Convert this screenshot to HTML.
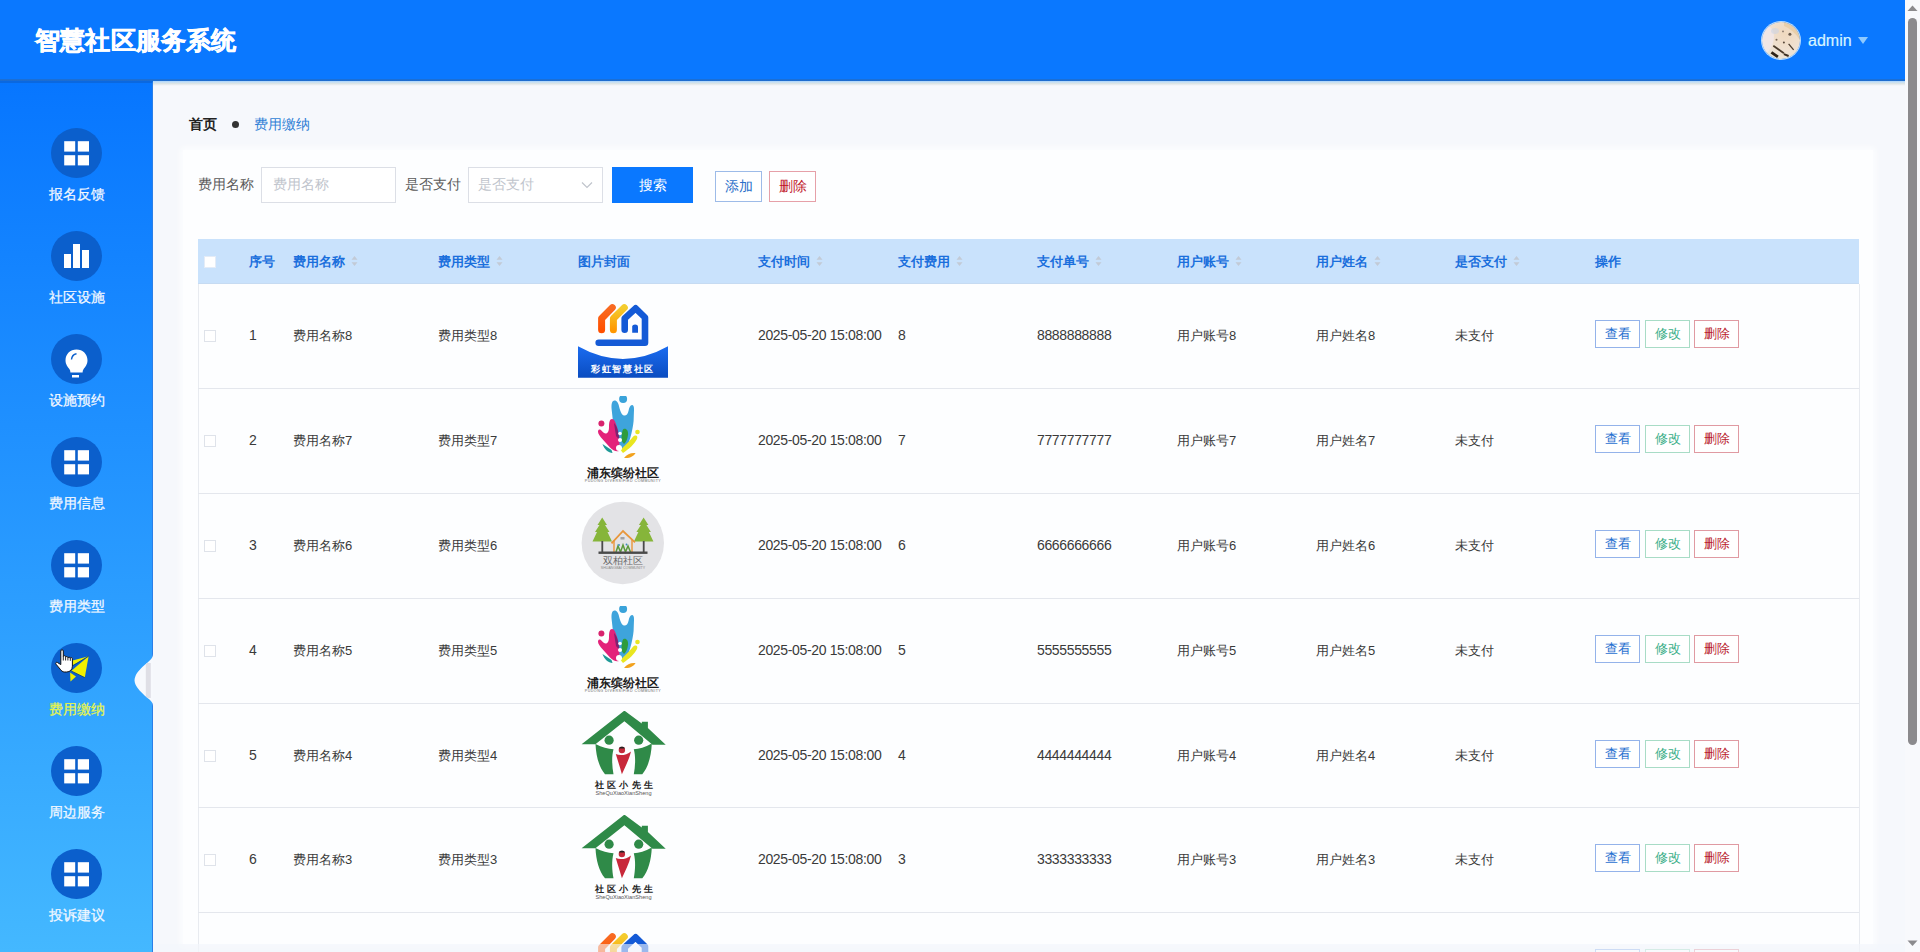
<!DOCTYPE html><html><head><meta charset="utf-8"><title>fee</title><style>
*{margin:0;padding:0;box-sizing:border-box}
html,body{width:1920px;height:952px;overflow:hidden;background:#f6f8fc;font-family:"Liberation Sans",sans-serif}
#hdr{position:absolute;left:0;top:0;width:1905px;height:81px;background:linear-gradient(#0a78ff 0,#0a78ff 79px,#1a70d8 79px,#1f6bcc 81px);z-index:5}
#hsh{position:absolute;left:153px;top:81px;width:1752px;height:5px;background:linear-gradient(#a9d4fb,#cfe1f0 35%,#dde5e2 55%,#eef0f5 80%,rgba(246,248,252,0));z-index:4}
#title{position:absolute;left:35px;top:24px;font-size:25px;font-weight:bold;color:#fff;letter-spacing:0.2px;white-space:nowrap;-webkit-text-stroke:0.6px #fff}
#avatar{position:absolute;left:1762px;top:22px;width:38px;height:37px;border-radius:50%;overflow:hidden;box-shadow:0 0 0 1px #b8dcff}
#admin{position:absolute;left:1808px;top:32px;font-size:16px;color:#d6f4ff;white-space:nowrap;-webkit-text-stroke:0.2px #d6f4ff}
#caret{position:absolute;left:1858px;top:37px;width:0;height:0;border-left:5px solid transparent;border-right:5px solid transparent;border-top:7px solid #8fcaff}
#side{position:absolute;left:0;top:81px;width:153px;height:871px;background:linear-gradient(#0776ff,#44b8ff);border-top:2px solid #0a68e0;border-right:1px solid #2a7fe8}
.mi{position:absolute;left:0;width:153px;height:103px}
.mi .c{position:absolute;left:51px;top:0;width:51px;height:50px;border-radius:50%;background:#0b5fcc}
.mi .c svg{position:absolute;left:0;top:0}
.mi .t{position:absolute;left:0;width:153px;top:58px;text-align:center;font-size:14px;color:#f2f8ff;white-space:nowrap;-webkit-text-stroke:0.25px currentColor}
#scroll{position:absolute;left:1905px;top:0;width:15px;height:952px;background:#f8f9fc}
#thumb{position:absolute;left:1908px;top:18px;width:9px;height:727px;border-radius:5px;background:#8b8a8d}
#panel{position:absolute;left:183px;top:150px;width:1690px;height:794px;background:#fdfeff;box-shadow:0 0 6px 2px #fdfeff}
.a{position:absolute;white-space:nowrap}
.lbl{font-size:14px;color:#5a5a5a}
.inp{border:1px solid #dcdfe6;background:#fff}
.ph{font-size:14px;color:#c0c4cc}
.th{position:absolute;top:239px;height:45px;background:#c9e2fc;border-bottom:1px solid #c6dbf2}
.h{position:absolute;top:253px;font-size:13px;font-weight:bold;color:#1a6fdc;white-space:nowrap}
.sort{position:absolute;width:7px;height:12px}
.d{position:absolute;font-size:13px;color:#3a3a3a;white-space:nowrap}
.n{font-size:14px;letter-spacing:-0.35px}
.ln{position:absolute;left:198px;width:1661px;height:1px;background:#e4e7ed}
.ob{position:absolute;width:45px;height:28px;font-size:13px;text-align:center;line-height:26px;background:#fff}
</style></head><body>
<div id="hdr"><div id="title">智慧社区服务系统</div>
<div id="avatar"><svg width="38" height="38" viewBox="0 0 38 38"><defs><radialGradient id="av" cx="0.6" cy="0.3" r="0.8"><stop offset="0" stop-color="#f0d9bf"/><stop offset="0.6" stop-color="#efe1d2"/><stop offset="1" stop-color="#e9e6d6"/></radialGradient></defs><filter id="avb"><feGaussianBlur stdDeviation="0.6"/></filter><g filter="url(#avb)"><rect width="38" height="38" fill="url(#av)"/><path d="M0 4C6 2 12 6 12 14 12 22 8 30 0 34Z" fill="#f1e7ea" opacity=".8"/><path d="M22 0H38V18C34 12 28 6 22 4Z" fill="#e6c79c" opacity=".7"/><ellipse cx="13" cy="9" rx="4" ry="3" fill="#cdd3e2" opacity=".6"/><path d="M11.3 23.8L21.9 31.2" stroke="#4a3a2c" stroke-width="1.8"/><path d="M9.4 30.3L15.9 34.9" stroke="#2e2418" stroke-width="2.8"/><path d="M21.9 32.1L26.6 34" stroke="#3a2e22" stroke-width="2"/><path d="M26.6 21.9L31.6 27.9" stroke="#4a3a2c" stroke-width="1.3"/><circle cx="27.9" cy="12.2" r="1.5" fill="#6a5a4c"/><circle cx="21.9" cy="20.5" r="1" fill="#5a4a3c"/><circle cx="14.5" cy="17.8" r="1" fill="#7a6a5c"/><circle cx="21" cy="9.4" r="0.9" fill="#8a7a6c"/></g></svg></div>
<div id="admin">admin</div><div id="caret"></div></div>
<div id="side"></div><div id="hsh"></div>
<div class="mi" style="top:128px"><div class="c"><svg width="51" height="50" viewBox="0 0 51 50"><rect x="13.2" y="13.2" width="11" height="10.4" fill="#fff"/><rect x="26.8" y="13.2" width="11.2" height="10.4" fill="#fff"/><rect x="13.2" y="27.2" width="11" height="10.2" fill="#fff"/><rect x="26.8" y="27.2" width="11.2" height="10.2" fill="#fff"/></svg></div><div class="t" style="color:#f2f8ff">报名反馈</div></div>
<div class="mi" style="top:231px"><div class="c"><svg width="51" height="50" viewBox="0 0 51 50"><rect x="13" y="23" width="7" height="14" fill="#fff"/><rect x="22" y="13" width="7" height="24" fill="#fff"/><rect x="31" y="19" width="7" height="18" fill="#fff"/></svg></div><div class="t" style="color:#f2f8ff">社区设施</div></div>
<div class="mi" style="top:334px"><div class="c"><svg width="51" height="50" viewBox="0 0 51 50"><path d="M25.5 15.5C31.9 15.5 36.5 20.2 36.5 26.2C36.5 30.5 34.2 32.8 32.5 35.2C31.8 36.3 31.6 37.3 31.6 38.5H19.4C19.4 37.3 19.2 36.3 18.5 35.2C16.8 32.8 14.5 30.5 14.5 26.2C14.5 20.2 19.1 15.5 25.5 15.5Z" fill="#fff"/><path d="M20.5 25.5C20.8 22.2 22.8 20.3 25.5 19.8" stroke="#0b5fcc" stroke-width="1.4" fill="none"/><rect x="21" y="41" width="7" height="2.5" fill="#fff"/></svg></div><div class="t" style="color:#f2f8ff">设施预约</div></div>
<div class="mi" style="top:437px"><div class="c"><svg width="51" height="50" viewBox="0 0 51 50"><rect x="13.2" y="13.2" width="11" height="10.4" fill="#fff"/><rect x="26.8" y="13.2" width="11.2" height="10.4" fill="#fff"/><rect x="13.2" y="27.2" width="11" height="10.2" fill="#fff"/><rect x="26.8" y="27.2" width="11.2" height="10.2" fill="#fff"/></svg></div><div class="t" style="color:#f2f8ff">费用信息</div></div>
<div class="mi" style="top:540px"><div class="c"><svg width="51" height="50" viewBox="0 0 51 50"><rect x="13.2" y="13.2" width="11" height="10.4" fill="#fff"/><rect x="26.8" y="13.2" width="11.2" height="10.4" fill="#fff"/><rect x="13.2" y="27.2" width="11" height="10.2" fill="#fff"/><rect x="26.8" y="27.2" width="11.2" height="10.2" fill="#fff"/></svg></div><div class="t" style="color:#f2f8ff">费用类型</div></div>
<div class="mi" style="top:643px"><div class="c"><svg width="51" height="50" viewBox="0 0 51 50"><path d="M20.1 27.9L37.6 13.2L33.8 34.6Z" fill="#f0f000"/><path d="M21.6 17.6L37.6 13.2L20.1 23.2Z" fill="#f0f000"/><path d="M19.1 29.6L25 33.4L19.5 38.4Z" fill="#f0f000"/><path d="M20.1 23.7L37.6 13.2M20.1 27.9L33.8 34.6" stroke="#0a3a7a" stroke-width="0.8"/><path d="M9.8 8C9.8 6.3 12.3 6.3 12.3 8V13.6C12.3 12.4 14.6 12.4 14.6 13.6V14.4C14.6 13.3 16.9 13.3 16.9 14.4V15C16.9 13.9 19.3 13.9 19.3 15V15.4C19.3 14.3 21.4 14.3 21.4 15.6V23.2C21.4 26.6 19 29 15.6 29H13.6C11.6 29 10.4 27.8 9.2 26.2L5 21.2C4.2 20.1 5.3 18.8 6.4 19.5L9.8 21.6Z" fill="#fff" stroke="#111" stroke-width="1"/><path d="M12.3 13.6V17.5M14.6 14.4V17.5M16.9 15V17.5M19.3 15.4V17.8" stroke="#111" stroke-width="0.9"/></svg></div><div class="t" style="color:#e8f54a">费用缴纳</div></div>
<div class="mi" style="top:746px"><div class="c"><svg width="51" height="50" viewBox="0 0 51 50"><rect x="13.2" y="13.2" width="11" height="10.4" fill="#fff"/><rect x="26.8" y="13.2" width="11.2" height="10.4" fill="#fff"/><rect x="13.2" y="27.2" width="11" height="10.2" fill="#fff"/><rect x="26.8" y="27.2" width="11.2" height="10.2" fill="#fff"/></svg></div><div class="t" style="color:#f2f8ff">周边服务</div></div>
<div class="mi" style="top:849px"><div class="c"><svg width="51" height="50" viewBox="0 0 51 50"><rect x="13.2" y="13.2" width="11" height="10.4" fill="#fff"/><rect x="26.8" y="13.2" width="11.2" height="10.4" fill="#fff"/><rect x="13.2" y="27.2" width="11" height="10.2" fill="#fff"/><rect x="26.8" y="27.2" width="11.2" height="10.2" fill="#fff"/></svg></div><div class="t" style="color:#f2f8ff">投诉建议</div></div>
<svg style="position:absolute;left:133px;top:654px" width="20" height="52" viewBox="0 0 20 52"><defs><clipPath id="bc"><path d="M20 0C20 4 17 6.5 14 9C8 14 4 18 2.5 22C1.2 25 1.2 27.5 2.5 30.5C4 34 8 38.5 14 43.5C17 46 20 48 20 52Z"/></clipPath></defs><path d="M20 0C20 4 17 6.5 14 9C8 14 4 18 2.5 22C1.2 25 1.2 27.5 2.5 30.5C4 34 8 38.5 14 43.5C17 46 20 48 20 52Z" fill="#f7f9fd"/><rect x="12.8" y="9" width="5" height="35" fill="#dfdfe6" clip-path="url(#bc)"/></svg>
<div id="scroll"></div><div id="thumb"></div>
<svg style="position:absolute;left:1907px;top:5px" width="11" height="7"><path d="M5.5 0.5L10.5 6H0.5Z" fill="#8b8a8d"/></svg>
<svg style="position:absolute;left:1907px;top:940px" width="11" height="7"><path d="M0.5 0.5H10.5L5.5 6Z" fill="#8b8a8d"/></svg>
<div id="panel"></div>
<div class="a" style="left:189px;top:116px;font-size:14px;font-weight:bold;color:#222">首页</div>
<div class="a" style="left:232px;top:121px;width:7px;height:7px;border-radius:50%;background:#333"></div>
<div class="a" style="left:254px;top:115px;font-size:14.3px;color:#2f7fd6">费用缴纳</div>
<div class="a lbl" style="left:198px;top:176px">费用名称</div>
<div class="a inp" style="left:261px;top:167px;width:135px;height:36px"></div>
<div class="a ph" style="left:273px;top:176px">费用名称</div>
<div class="a lbl" style="left:405px;top:176px">是否支付</div>
<div class="a inp" style="left:468px;top:167px;width:135px;height:36px"></div>
<div class="a ph" style="left:478px;top:176px">是否支付</div>
<svg style="position:absolute;left:581px;top:181px" width="12" height="8"><path d="M1 1.5L6 6.5L11 1.5" stroke="#c0c4cc" stroke-width="1.2" fill="none"/></svg>
<div class="a" style="left:612px;top:167px;width:81px;height:36px;background:#0a78ff;color:#fff;font-size:14px;text-align:center;line-height:36px">搜索</div>
<div class="a" style="left:715px;top:171px;width:47px;height:31px;border:1px solid #9dbbe8;background:#fff;color:#2a6fc9;font-size:14px;text-align:center;line-height:29px">添加</div>
<div class="a" style="left:769px;top:171px;width:47px;height:31px;border:1px solid #e6a0a8;background:#fff;color:#c0152a;font-size:14px;text-align:center;line-height:29px">删除</div>
<div class="th" style="left:198px;width:1661px"></div>
<div class="a" style="left:204px;top:256px;width:12px;height:12px;background:#fff;border:1px solid #e4ecf7"></div>
<div class="h" style="left:249px">序号</div>
<div class="h" style="left:293px">费用名称</div>
<div class="sort" style="left:351px;top:253px"><svg width="7" height="12" viewBox="0 0 7 12"><path d="M0.5 4.8L3.5 1L6.5 4.8Z" fill="#c2cad6"/><path d="M0.5 7.2L3.5 11L6.5 7.2Z" fill="#c2cad6"/></svg></div>
<div class="h" style="left:438px">费用类型</div>
<div class="sort" style="left:496px;top:253px"><svg width="7" height="12" viewBox="0 0 7 12"><path d="M0.5 4.8L3.5 1L6.5 4.8Z" fill="#c2cad6"/><path d="M0.5 7.2L3.5 11L6.5 7.2Z" fill="#c2cad6"/></svg></div>
<div class="h" style="left:578px">图片封面</div>
<div class="h" style="left:758px">支付时间</div>
<div class="sort" style="left:816px;top:253px"><svg width="7" height="12" viewBox="0 0 7 12"><path d="M0.5 4.8L3.5 1L6.5 4.8Z" fill="#c2cad6"/><path d="M0.5 7.2L3.5 11L6.5 7.2Z" fill="#c2cad6"/></svg></div>
<div class="h" style="left:898px">支付费用</div>
<div class="sort" style="left:956px;top:253px"><svg width="7" height="12" viewBox="0 0 7 12"><path d="M0.5 4.8L3.5 1L6.5 4.8Z" fill="#c2cad6"/><path d="M0.5 7.2L3.5 11L6.5 7.2Z" fill="#c2cad6"/></svg></div>
<div class="h" style="left:1037px">支付单号</div>
<div class="sort" style="left:1095px;top:253px"><svg width="7" height="12" viewBox="0 0 7 12"><path d="M0.5 4.8L3.5 1L6.5 4.8Z" fill="#c2cad6"/><path d="M0.5 7.2L3.5 11L6.5 7.2Z" fill="#c2cad6"/></svg></div>
<div class="h" style="left:1177px">用户账号</div>
<div class="sort" style="left:1235px;top:253px"><svg width="7" height="12" viewBox="0 0 7 12"><path d="M0.5 4.8L3.5 1L6.5 4.8Z" fill="#c2cad6"/><path d="M0.5 7.2L3.5 11L6.5 7.2Z" fill="#c2cad6"/></svg></div>
<div class="h" style="left:1316px">用户姓名</div>
<div class="sort" style="left:1374px;top:253px"><svg width="7" height="12" viewBox="0 0 7 12"><path d="M0.5 4.8L3.5 1L6.5 4.8Z" fill="#c2cad6"/><path d="M0.5 7.2L3.5 11L6.5 7.2Z" fill="#c2cad6"/></svg></div>
<div class="h" style="left:1455px">是否支付</div>
<div class="sort" style="left:1513px;top:253px"><svg width="7" height="12" viewBox="0 0 7 12"><path d="M0.5 4.8L3.5 1L6.5 4.8Z" fill="#c2cad6"/><path d="M0.5 7.2L3.5 11L6.5 7.2Z" fill="#c2cad6"/></svg></div>
<div class="h" style="left:1595px">操作</div>
<div class="a" style="left:198px;top:284px;width:1px;height:668px;background:#e8ebf0"></div>
<div class="a" style="left:1859px;top:284px;width:1px;height:668px;background:#e8ebf0"></div>
<div class="ln" style="top:388px"></div>
<div class="ln" style="top:493px"></div>
<div class="ln" style="top:598px"></div>
<div class="ln" style="top:703px"></div>
<div class="ln" style="top:807px"></div>
<div class="ln" style="top:912px"></div>
<div class="a" style="left:204px;top:330px;width:12px;height:12px;border:1px solid #dfe3ea;background:#fff"></div>
<div class="d n" style="left:249px;top:327px">1</div>
<div class="d" style="left:293px;top:327px">费用名称8</div>
<div class="d" style="left:438px;top:327px">费用类型8</div>
<div class="a" style="left:578px;top:291px;width:90px;height:90px"><svg width="90" height="90" viewBox="0 0 90 90"><defs><linearGradient id="g0" x1="0" y1="0" x2="0" y2="1"><stop offset="0" stop-color="#1b6cf0"/><stop offset="1" stop-color="#0a4cc0"/></linearGradient><linearGradient id="gy" x1="0" y1="0" x2="0" y2="1"><stop offset="0" stop-color="#f4cc2e"/><stop offset="1" stop-color="#ff9800"/></linearGradient><linearGradient id="go" x1="0" y1="0" x2="0" y2="1"><stop offset="0" stop-color="#f86a22"/><stop offset="1" stop-color="#ff5000"/></linearGradient></defs>
<path d="M0 55.3Q45 80.5 90 55.3V86.8H0Z" fill="url(#g0)"/>
<path d="M23.6 38.8V27.5L34.3 16.6" stroke="url(#go)" stroke-width="7" stroke-linecap="round" stroke-linejoin="round" fill="none"/>
<path d="M35.4 38.8V27.5L46.3 16.6" stroke="url(#gy)" stroke-width="7" stroke-linecap="round" stroke-linejoin="round" fill="none"/>
<path d="M46.7 38.8V27.4L57.6 17.3L67 26.5V51.7H20.7" stroke="#145ad6" stroke-width="6.6" stroke-linecap="round" stroke-linejoin="round" fill="none"/>
<path d="M54.2 41.8V35.5C54.2 32.8 60 32.8 60 35.5V41.8Z" fill="#145ad6"/>
<text x="45" y="80.5" font-size="9.3" fill="#fff" text-anchor="middle" font-weight="bold" letter-spacing="1.6">彩虹智慧社区</text></svg></div>
<div class="d n" style="left:758px;top:327px">2025-05-20 15:08:00</div>
<div class="d n" style="left:898px;top:327px">8</div>
<div class="d n" style="left:1037px;top:327px">8888888888</div>
<div class="d" style="left:1177px;top:327px">用户账号8</div>
<div class="d" style="left:1316px;top:327px">用户姓名8</div>
<div class="d" style="left:1455px;top:327px">未支付</div>
<div class="ob" style="left:1595px;top:320px;border:1px solid #94b3ea;color:#1f6fd0">查看</div>
<div class="ob" style="left:1645px;top:320px;border:1px solid #a8dcc6;color:#3aae88">修改</div>
<div class="ob" style="left:1694px;top:320px;border:1px solid #e09aa2;color:#b8202c">删除</div>
<div class="a" style="left:204px;top:435px;width:12px;height:12px;border:1px solid #dfe3ea;background:#fff"></div>
<div class="d n" style="left:249px;top:432px">2</div>
<div class="d" style="left:293px;top:432px">费用名称7</div>
<div class="d" style="left:438px;top:432px">费用类型7</div>
<div class="a" style="left:578px;top:396px;width:90px;height:90px"><svg width="90" height="90" viewBox="0 0 90 90">
<circle cx="45.1" cy="3" r="4" fill="#3aa3da"/>
<path d="M36.5 4.5C34 4.5 33.2 8 33.6 13L35.5 30C37 42 42 52 47 55C51 48 54.5 36 55.6 25L56 14C56.2 10.5 55.4 9 54 9C52.2 9 51.2 11.5 50.5 15C49.8 18.2 48.4 19.6 46.6 19.6C44.4 19.6 42.6 16.8 41.2 11C40.4 7 39 4.5 36.5 4.5Z" fill="#3ea4dc"/>
<circle cx="23.4" cy="27.6" r="3" fill="#d8236e"/>
<path d="M20.2 34.5C19.5 36 20.5 38.5 23 41.5L32 51.5C34.8 54.5 38 56 41 55C42 49 41.5 41 39.5 33C38 27 36.5 23 34 23C31.8 23 31 26 31 31C31 35 30 37.5 27.5 37.5C25.5 37.5 24 35 22.5 33.8C21.5 33 20.6 33.4 20.2 34.5Z" fill="#e3227a"/>
<path d="M36 27C39 30 41 36 41.5 44L38 40Z" fill="#5a1f6a" opacity=".7"/>
<path d="M45.5 33C48 32 50.5 34 50 39C49.5 43 48 46.5 46 48L43.6 45C43.4 40 44 34 45.5 33Z" fill="#2e9c3c"/>
<circle cx="59.5" cy="36" r="2.3" fill="#e9e620"/><path d="M57 39.5C59 39 60 41 59 43C56.5 48 51 53 45 57L42.5 54C46 50 51 46 54 42C55 40.5 56 39.7 57 39.5Z" fill="#e9e620"/>
<path d="M24.5 48L33.5 54L34.5 57C30.5 57 26 53 24.5 48Z" fill="#1e9a98"/>
<path d="M46 62C49 58 53 56.5 57.5 57C56 60 52 62.5 46 62Z" fill="#f2a21e"/>
<circle cx="42" cy="37.5" r="1.8" fill="#fff"/><circle cx="42" cy="44" r="2" fill="#fff"/><circle cx="41" cy="52" r="3" fill="#fff"/>
<text x="45" y="80.8" font-size="12.4" fill="#1c1c1c" text-anchor="middle" font-weight="bold">浦东缤纷社区</text>
<text x="45" y="85.5" font-size="3.6" fill="#666" text-anchor="middle" letter-spacing="0.5">PUDONG DIVERSIFIED COMMUNITY</text></svg></div>
<div class="d n" style="left:758px;top:432px">2025-05-20 15:08:00</div>
<div class="d n" style="left:898px;top:432px">7</div>
<div class="d n" style="left:1037px;top:432px">7777777777</div>
<div class="d" style="left:1177px;top:432px">用户账号7</div>
<div class="d" style="left:1316px;top:432px">用户姓名7</div>
<div class="d" style="left:1455px;top:432px">未支付</div>
<div class="ob" style="left:1595px;top:425px;border:1px solid #94b3ea;color:#1f6fd0">查看</div>
<div class="ob" style="left:1645px;top:425px;border:1px solid #a8dcc6;color:#3aae88">修改</div>
<div class="ob" style="left:1694px;top:425px;border:1px solid #e09aa2;color:#b8202c">删除</div>
<div class="a" style="left:204px;top:540px;width:12px;height:12px;border:1px solid #dfe3ea;background:#fff"></div>
<div class="d n" style="left:249px;top:537px">3</div>
<div class="d" style="left:293px;top:537px">费用名称6</div>
<div class="d" style="left:438px;top:537px">费用类型6</div>
<div class="a" style="left:578px;top:501px;width:90px;height:90px"><svg width="90" height="90" viewBox="0 0 90 90">
<circle cx="44.8" cy="42" r="41.2" fill="#e3e3e6"/>
<path d="M24.2 16.5L29 24H27L31.5 31H29.5L34 40.5H14.5L19 31H17L21.5 24H19.5Z" fill="#86b53a"/>
<path d="M65.6 16.5L70.4 24H68.4L72.9 31H70.9L75.4 40.5H55.9L60.4 31H58.4L62.9 24H60.9Z" fill="#86b53a"/>
<rect x="23.4" y="40" width="1.8" height="11" fill="#4a4a4a"/><rect x="64.8" y="40" width="1.8" height="11" fill="#4a4a4a"/>
<path d="M33.5 42.3L45 30L57 41.3" stroke="#e8963a" stroke-width="1.8" fill="none"/>
<path d="M36 40V51M54 39V51" stroke="#e8963a" stroke-width="1.4"/>
<rect x="42.5" y="36" width="4" height="2.5" fill="#777" opacity=".6"/>
<path d="M38 51L40 45L42.5 51L45 44L47.5 51L50 45L52.5 51" stroke="#5b9a3b" stroke-width="1.5" fill="none"/>
<circle cx="41" cy="44" r="0.9" fill="#3a8ac0"/><circle cx="48.5" cy="43.5" r="0.9" fill="#3a8ac0"/>
<rect x="20.5" y="50.5" width="49" height="2.4" fill="#4a4a4a"/>
<text x="45" y="62.6" font-size="9.5" fill="#6a6a6a" text-anchor="middle">双柏社区</text>
<text x="45" y="68" font-size="3.6" fill="#888" text-anchor="middle">SHUANGBAI COMMUNITY</text></svg></div>
<div class="d n" style="left:758px;top:537px">2025-05-20 15:08:00</div>
<div class="d n" style="left:898px;top:537px">6</div>
<div class="d n" style="left:1037px;top:537px">6666666666</div>
<div class="d" style="left:1177px;top:537px">用户账号6</div>
<div class="d" style="left:1316px;top:537px">用户姓名6</div>
<div class="d" style="left:1455px;top:537px">未支付</div>
<div class="ob" style="left:1595px;top:530px;border:1px solid #94b3ea;color:#1f6fd0">查看</div>
<div class="ob" style="left:1645px;top:530px;border:1px solid #a8dcc6;color:#3aae88">修改</div>
<div class="ob" style="left:1694px;top:530px;border:1px solid #e09aa2;color:#b8202c">删除</div>
<div class="a" style="left:204px;top:645px;width:12px;height:12px;border:1px solid #dfe3ea;background:#fff"></div>
<div class="d n" style="left:249px;top:642px">4</div>
<div class="d" style="left:293px;top:642px">费用名称5</div>
<div class="d" style="left:438px;top:642px">费用类型5</div>
<div class="a" style="left:578px;top:606px;width:90px;height:90px"><svg width="90" height="90" viewBox="0 0 90 90">
<circle cx="45.1" cy="3" r="4" fill="#3aa3da"/>
<path d="M36.5 4.5C34 4.5 33.2 8 33.6 13L35.5 30C37 42 42 52 47 55C51 48 54.5 36 55.6 25L56 14C56.2 10.5 55.4 9 54 9C52.2 9 51.2 11.5 50.5 15C49.8 18.2 48.4 19.6 46.6 19.6C44.4 19.6 42.6 16.8 41.2 11C40.4 7 39 4.5 36.5 4.5Z" fill="#3ea4dc"/>
<circle cx="23.4" cy="27.6" r="3" fill="#d8236e"/>
<path d="M20.2 34.5C19.5 36 20.5 38.5 23 41.5L32 51.5C34.8 54.5 38 56 41 55C42 49 41.5 41 39.5 33C38 27 36.5 23 34 23C31.8 23 31 26 31 31C31 35 30 37.5 27.5 37.5C25.5 37.5 24 35 22.5 33.8C21.5 33 20.6 33.4 20.2 34.5Z" fill="#e3227a"/>
<path d="M36 27C39 30 41 36 41.5 44L38 40Z" fill="#5a1f6a" opacity=".7"/>
<path d="M45.5 33C48 32 50.5 34 50 39C49.5 43 48 46.5 46 48L43.6 45C43.4 40 44 34 45.5 33Z" fill="#2e9c3c"/>
<circle cx="59.5" cy="36" r="2.3" fill="#e9e620"/><path d="M57 39.5C59 39 60 41 59 43C56.5 48 51 53 45 57L42.5 54C46 50 51 46 54 42C55 40.5 56 39.7 57 39.5Z" fill="#e9e620"/>
<path d="M24.5 48L33.5 54L34.5 57C30.5 57 26 53 24.5 48Z" fill="#1e9a98"/>
<path d="M46 62C49 58 53 56.5 57.5 57C56 60 52 62.5 46 62Z" fill="#f2a21e"/>
<circle cx="42" cy="37.5" r="1.8" fill="#fff"/><circle cx="42" cy="44" r="2" fill="#fff"/><circle cx="41" cy="52" r="3" fill="#fff"/>
<text x="45" y="80.8" font-size="12.4" fill="#1c1c1c" text-anchor="middle" font-weight="bold">浦东缤纷社区</text>
<text x="45" y="85.5" font-size="3.6" fill="#666" text-anchor="middle" letter-spacing="0.5">PUDONG DIVERSIFIED COMMUNITY</text></svg></div>
<div class="d n" style="left:758px;top:642px">2025-05-20 15:08:00</div>
<div class="d n" style="left:898px;top:642px">5</div>
<div class="d n" style="left:1037px;top:642px">5555555555</div>
<div class="d" style="left:1177px;top:642px">用户账号5</div>
<div class="d" style="left:1316px;top:642px">用户姓名5</div>
<div class="d" style="left:1455px;top:642px">未支付</div>
<div class="ob" style="left:1595px;top:635px;border:1px solid #94b3ea;color:#1f6fd0">查看</div>
<div class="ob" style="left:1645px;top:635px;border:1px solid #a8dcc6;color:#3aae88">修改</div>
<div class="ob" style="left:1694px;top:635px;border:1px solid #e09aa2;color:#b8202c">删除</div>
<div class="a" style="left:204px;top:750px;width:12px;height:12px;border:1px solid #dfe3ea;background:#fff"></div>
<div class="d n" style="left:249px;top:747px">5</div>
<div class="d" style="left:293px;top:747px">费用名称4</div>
<div class="d" style="left:438px;top:747px">费用类型4</div>
<div class="a" style="left:578px;top:711px;width:90px;height:90px"><svg width="90" height="90" viewBox="0 0 90 90">
<path d="M46.4 -0.4L63.8 12.4V10.8H69.9V16.9L87.7 33.8H74.5L46.4 10.3L17.4 33.3H3.6Z" fill="#2f8a48"/>
<circle cx="31.1" cy="29.2" r="4.6" fill="#2f8a48"/><circle cx="60.7" cy="29.2" r="4.6" fill="#2f8a48"/>
<path d="M17.5 33C24 36.5 30 38 35.5 38.2C33.5 46 34 55 35.5 63.3H27C21 56 18 45 17.5 33Z" fill="#2f8a48"/>
<path d="M73.8 32.5C67 36.5 61 38 55.8 38.2C57.8 46 57.3 55 55.8 63.3H64.3C70.3 56 73.3 45 73.8 32.5Z" fill="#2f8a48"/>
<circle cx="43.9" cy="39" r="3.2" fill="#c42a3a"/><path d="M41 37.5C41 35 46.8 35 46.8 37.5Z" fill="#222"/>
<path d="M37.8 43C42 45 49 44 53 40.4C51 49 47 56 43.9 63.3C42 56 39.5 49 37.8 43Z" fill="#c8283a"/>
<text x="47.5" y="76.6" font-size="9.4" fill="#222" text-anchor="middle" font-weight="bold" letter-spacing="3.2">社区小先生</text>
<text x="45.5" y="84.2" font-size="5.2" fill="#555" text-anchor="middle" textLength="56" lengthAdjust="spacingAndGlyphs">SheQuXiaoXianSheng</text></svg></div>
<div class="d n" style="left:758px;top:747px">2025-05-20 15:08:00</div>
<div class="d n" style="left:898px;top:747px">4</div>
<div class="d n" style="left:1037px;top:747px">4444444444</div>
<div class="d" style="left:1177px;top:747px">用户账号4</div>
<div class="d" style="left:1316px;top:747px">用户姓名4</div>
<div class="d" style="left:1455px;top:747px">未支付</div>
<div class="ob" style="left:1595px;top:740px;border:1px solid #94b3ea;color:#1f6fd0">查看</div>
<div class="ob" style="left:1645px;top:740px;border:1px solid #a8dcc6;color:#3aae88">修改</div>
<div class="ob" style="left:1694px;top:740px;border:1px solid #e09aa2;color:#b8202c">删除</div>
<div class="a" style="left:204px;top:854px;width:12px;height:12px;border:1px solid #dfe3ea;background:#fff"></div>
<div class="d n" style="left:249px;top:851px">6</div>
<div class="d" style="left:293px;top:851px">费用名称3</div>
<div class="d" style="left:438px;top:851px">费用类型3</div>
<div class="a" style="left:578px;top:815px;width:90px;height:90px"><svg width="90" height="90" viewBox="0 0 90 90">
<path d="M46.4 -0.4L63.8 12.4V10.8H69.9V16.9L87.7 33.8H74.5L46.4 10.3L17.4 33.3H3.6Z" fill="#2f8a48"/>
<circle cx="31.1" cy="29.2" r="4.6" fill="#2f8a48"/><circle cx="60.7" cy="29.2" r="4.6" fill="#2f8a48"/>
<path d="M17.5 33C24 36.5 30 38 35.5 38.2C33.5 46 34 55 35.5 63.3H27C21 56 18 45 17.5 33Z" fill="#2f8a48"/>
<path d="M73.8 32.5C67 36.5 61 38 55.8 38.2C57.8 46 57.3 55 55.8 63.3H64.3C70.3 56 73.3 45 73.8 32.5Z" fill="#2f8a48"/>
<circle cx="43.9" cy="39" r="3.2" fill="#c42a3a"/><path d="M41 37.5C41 35 46.8 35 46.8 37.5Z" fill="#222"/>
<path d="M37.8 43C42 45 49 44 53 40.4C51 49 47 56 43.9 63.3C42 56 39.5 49 37.8 43Z" fill="#c8283a"/>
<text x="47.5" y="76.6" font-size="9.4" fill="#222" text-anchor="middle" font-weight="bold" letter-spacing="3.2">社区小先生</text>
<text x="45.5" y="84.2" font-size="5.2" fill="#555" text-anchor="middle" textLength="56" lengthAdjust="spacingAndGlyphs">SheQuXiaoXianSheng</text></svg></div>
<div class="d n" style="left:758px;top:851px">2025-05-20 15:08:00</div>
<div class="d n" style="left:898px;top:851px">3</div>
<div class="d n" style="left:1037px;top:851px">3333333333</div>
<div class="d" style="left:1177px;top:851px">用户账号3</div>
<div class="d" style="left:1316px;top:851px">用户姓名3</div>
<div class="d" style="left:1455px;top:851px">未支付</div>
<div class="ob" style="left:1595px;top:844px;border:1px solid #94b3ea;color:#1f6fd0">查看</div>
<div class="ob" style="left:1645px;top:844px;border:1px solid #a8dcc6;color:#3aae88">修改</div>
<div class="ob" style="left:1694px;top:844px;border:1px solid #e09aa2;color:#b8202c">删除</div>
<div class="a" style="left:204px;top:959px;width:12px;height:12px;border:1px solid #dfe3ea;background:#fff"></div>
<div class="d n" style="left:249px;top:956px">7</div>
<div class="d" style="left:293px;top:956px">费用名称2</div>
<div class="d" style="left:438px;top:956px">费用类型2</div>
<div class="a" style="left:578px;top:920px;width:90px;height:90px"><svg width="90" height="90" viewBox="0 0 90 90"><defs><linearGradient id="g0" x1="0" y1="0" x2="0" y2="1"><stop offset="0" stop-color="#1b6cf0"/><stop offset="1" stop-color="#0a4cc0"/></linearGradient><linearGradient id="gy" x1="0" y1="0" x2="0" y2="1"><stop offset="0" stop-color="#f4cc2e"/><stop offset="1" stop-color="#ff9800"/></linearGradient><linearGradient id="go" x1="0" y1="0" x2="0" y2="1"><stop offset="0" stop-color="#f86a22"/><stop offset="1" stop-color="#ff5000"/></linearGradient></defs>
<path d="M0 55.3Q45 80.5 90 55.3V86.8H0Z" fill="url(#g0)"/>
<path d="M23.6 38.8V27.5L34.3 16.6" stroke="url(#go)" stroke-width="7" stroke-linecap="round" stroke-linejoin="round" fill="none"/>
<path d="M35.4 38.8V27.5L46.3 16.6" stroke="url(#gy)" stroke-width="7" stroke-linecap="round" stroke-linejoin="round" fill="none"/>
<path d="M46.7 38.8V27.4L57.6 17.3L67 26.5V51.7H20.7" stroke="#145ad6" stroke-width="6.6" stroke-linecap="round" stroke-linejoin="round" fill="none"/>
<path d="M54.2 41.8V35.5C54.2 32.8 60 32.8 60 35.5V41.8Z" fill="#145ad6"/>
<text x="45" y="80.5" font-size="9.3" fill="#fff" text-anchor="middle" font-weight="bold" letter-spacing="1.6">彩虹智慧社区</text></svg></div>
<div class="d n" style="left:758px;top:956px">2025-05-20 15:08:00</div>
<div class="d n" style="left:898px;top:956px">2</div>
<div class="d n" style="left:1037px;top:956px">2222222222</div>
<div class="d" style="left:1177px;top:956px">用户账号2</div>
<div class="d" style="left:1316px;top:956px">用户姓名2</div>
<div class="d" style="left:1455px;top:956px">未支付</div>
<div class="ob" style="left:1595px;top:949px;border:1px solid #94b3ea;color:#1f6fd0">查看</div>
<div class="ob" style="left:1645px;top:949px;border:1px solid #a8dcc6;color:#3aae88">修改</div>
<div class="ob" style="left:1694px;top:949px;border:1px solid #e09aa2;color:#b8202c">删除</div>
<div class="a" style="left:153px;top:944px;width:1752px;height:8px;background:rgba(244,247,252,.6)"></div>
</body></html>
